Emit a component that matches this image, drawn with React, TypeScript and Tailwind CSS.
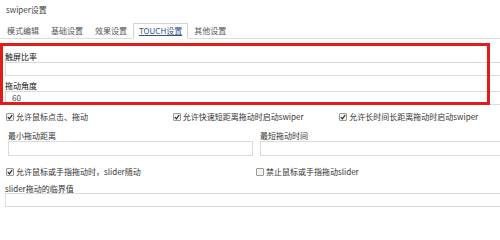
const font = "font-['Noto_Sans_CJK_SC','Noto_Sans',sans-serif]"

function Check({ checked }: { checked?: boolean }) {
  return (
    <span className="w-[8px] h-[8px] border border-[#9a9a9a] bg-[#f2f2f2] rounded-[1px] flex items-center justify-center shrink-0">
      {checked && (
        <svg width="6" height="6" viewBox="0 0 6 6">
          <path d="M0.8 3.2 L2.4 4.8 L5.2 1" stroke="#222" strokeWidth="1.2" fill="none" />
        </svg>
      )}
    </span>
  )
}

function CheckItem({ label, checked }: { label: string; checked?: boolean }) {
  return (
    <label className="flex items-center gap-[2px] pl-[6px] text-[#333]">
      <Check checked={checked} />
      <span>{label}</span>
    </label>
  )
}

function Input({ value, className = "" }: { value?: string; className?: string }) {
  return (
    <div className={"border border-[#dadada] bg-white flex items-center pl-[6px] text-[#444] " + className}>
      {value}
    </div>
  )
}

function Tab({ label, active }: { label: string; active?: boolean }) {
  return (
    <div
      className={
        "px-[5px] flex items-center border -mb-px " +
        (active
          ? "border-[#d4d4d4] border-b-white bg-white text-[#35527f] underline"
          : "border-transparent text-[#555]")
      }
    >
      {label}
    </div>
  )
}

export default function App() {
  return (
    <div className={"relative w-[500px] h-[240px] overflow-hidden bg-white text-[8px] leading-[10px] " + font}>
      <div className="h-[20px] flex items-center pl-[6px] text-[#444]">swiper设置</div>

      <div className="mt-[3px] h-[16px] flex pl-[1px] border-b border-[#dcdcdc]">
        <Tab label="模式编辑" />
        <Tab label="基础设置" />
        <Tab label="效果设置" />
        <Tab label="TOUCH设置" active />
        <Tab label="其他设置" />
      </div>

      <div className="w-[510px] pl-[5px]">
        <div className="mt-[13px] h-[10px] text-[#111]">触屏比率</div>
        <Input className="h-[14px]" />
        <div className="mt-[5px] h-[10px] text-[#111]">拖动角度</div>
        <Input className="h-[14px]" value="60" />
      </div>

      <div className="h-[24px] grid grid-cols-3 items-center">
        <CheckItem label="允许鼠标点击、拖动" checked />
        <CheckItem label="允许快速短距离拖动时启动swiper" checked />
        <CheckItem label="允许长时间长距离拖动时启动swiper" checked />
      </div>

      <div className="grid grid-cols-[253px_1fr] w-[510px]">
        <div className="pl-[8px]">
          <div className="mt-[2px] h-[10px] text-[#333]">最小拖动距离</div>
          <Input className="h-[15px]" />
        </div>
        <div className="pl-[7px]">
          <div className="mt-[2px] h-[10px] text-[#333]">最短拖动时间</div>
          <Input className="h-[15px]" />
        </div>
      </div>

      <div className="mt-[4px] h-[24px] grid grid-cols-2 items-center">
        <CheckItem label="允许鼠标或手指拖动时，slider随动" checked />
        <CheckItem label="禁止鼠标或手指拖动slider" />
      </div>

      <div className="w-[510px] pl-[5px]">
        <div className="h-[9px] text-[#333]">slider拖动的临界值</div>
        <Input className="h-[14px]" />
      </div>

      <div className="absolute left-0 top-[43px] w-[490px] h-[62px] border-[3px] border-[#e31b1b]" />
    </div>
  )
}
